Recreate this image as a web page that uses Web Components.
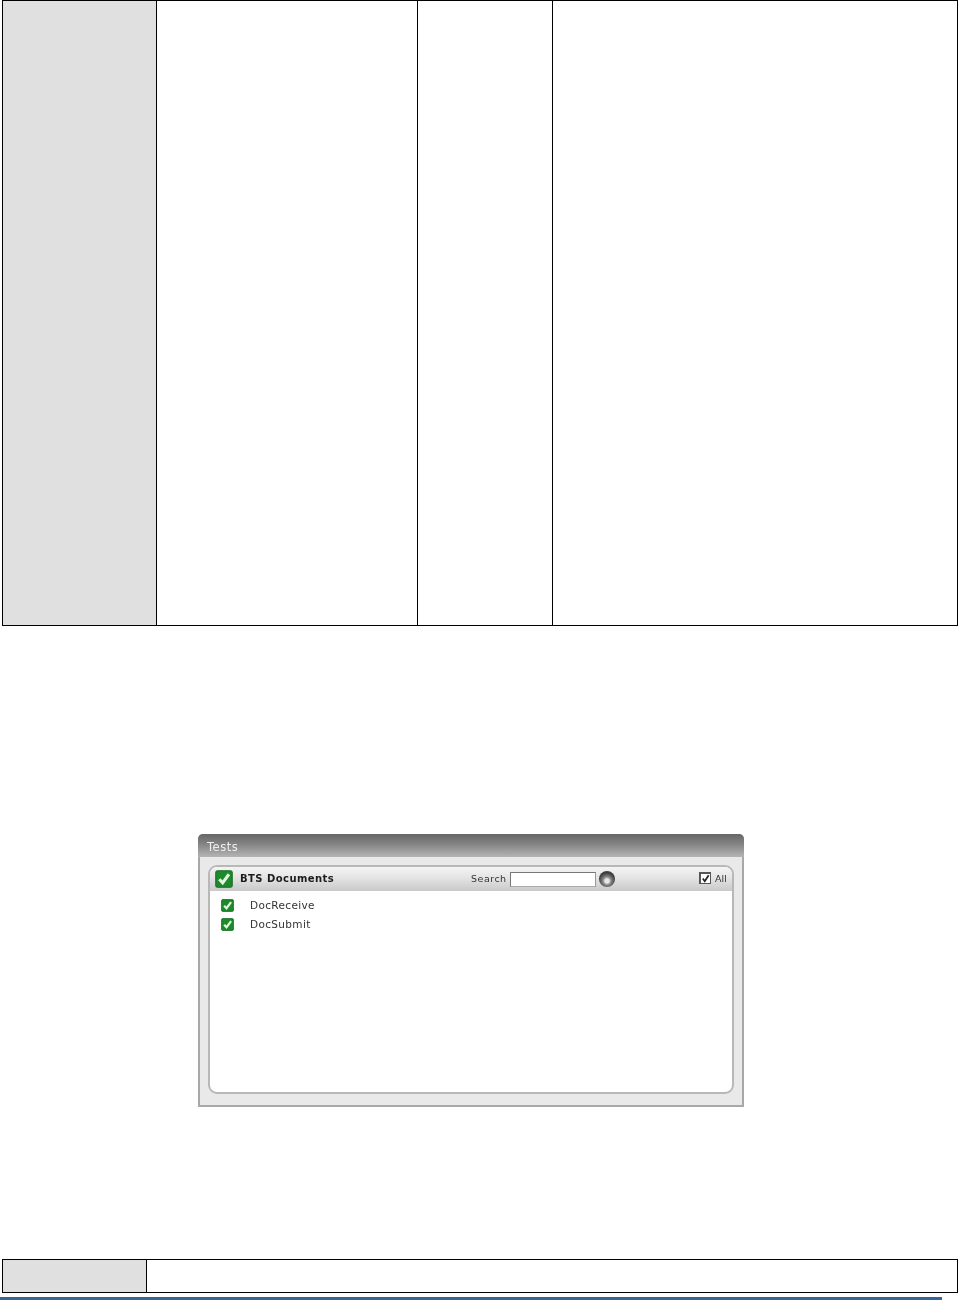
<!DOCTYPE html>
<html><head><meta charset="utf-8"><style>
html,body{margin:0;padding:0;background:#fff;font-family:"DejaVu Sans",sans-serif}
body{width:958px;height:1300px;overflow:hidden}
</style></head><body>
<doc-table style="--h:626px;--cols:153px 261px 135px 1fr;--top:1px"><i></i><i></i><i></i><i></i></doc-table>
<tests-panel></tests-panel>
<doc-table style="--h:34px;--cols:143px 1fr;--top:1px;--gap:152px"><i></i><i></i></doc-table>
<page-rule></page-rule>
<script>
const chk=s=>`<svg width="${s}" height="${s}" viewBox="0 0 16 16" style="display:block;flex:none"><rect x=".7" y=".7" width="14.6" height="14.6" rx="1.6" fill="#1d8a2b" stroke="#176f22"/><path d="M3.8 8.2l3 3.2L12.4 3.8" fill="none" stroke="#e4f6de" stroke-width="2.7"/></svg>`;
customElements.define('doc-table',class extends HTMLElement{constructor(){super();this.attachShadow({mode:'open'}).innerHTML=`<style>
:host{display:grid;grid-template-columns:var(--cols);height:var(--h);margin:var(--gap,0) 0 0 2px;width:956px;box-sizing:border-box;border:1.5px solid #000;border-top-width:var(--top);border-right-width:1px}
::slotted(i){display:block;border-left:1px solid #000}
::slotted(i:first-child){background:#e0e0e0;border-left:0}
</style><slot></slot>`}});
customElements.define('page-rule',class extends HTMLElement{constructor(){super();this.attachShadow({mode:'open'}).innerHTML=`<style>:host{display:block;width:942px;height:3px;margin-top:4px;background:#386594}</style>`}});
customElements.define('tests-panel',class extends HTMLElement{constructor(){super();this.attachShadow({mode:'open'}).innerHTML=`<style>
:host{display:flex;flex-direction:column;width:546px;height:273px;margin:208px 0 0 198px;box-sizing:border-box;background:#e9e9e9;border:2px solid #a8a8a8;border-top:0;border-radius:5px 5px 0 0;font-family:"DejaVu Sans",sans-serif;color:#222;filter:blur(.3px)}
.title{height:23px;margin:0 -2px;border-radius:5px 5px 0 0;background:linear-gradient(#666,#858585 45%,#b4b4b4);color:#eee;font-size:11.5px;line-height:27px;padding-left:9px;letter-spacing:.5px;flex:none}
.inner{flex:1;margin:8px 8px 11px 8px;background:#fff;border:2px solid #b8b8b8;border-radius:9px;display:flex;flex-direction:column;min-height:0}
.head{height:24px;flex:none;display:flex;align-items:center;border-radius:7px 7px 0 0;background:linear-gradient(#f4f4f4,#e6e6e6 40%,#c9c9c9);padding-left:5px}
.head b{font-size:10px;margin:-2px 0 0 7px;letter-spacing:.45px;color:#1c1c1c;width:231px;white-space:nowrap}
.s{font-size:9.5px;color:#333;letter-spacing:.5px;width:39px;margin-top:-2px}
.inp{width:84px;height:13px;background:#fff;border:1px solid #777;border-right-color:#999;border-bottom-color:#aaa}
.go{width:16px;height:16px;border-radius:50%;margin:-1px 0 0 3px;background:radial-gradient(circle at 50% 62%,#e8e8e8 0 2px,#8a8a8a 4px,#3e3e3e 8px)}
.all{margin:-2px 0 0 84px;width:9px;height:9px;border:1px solid #555;border-width:2px 1px 1px 2px;background:#fff;display:flex}
.lbl{font-size:9.5px;margin:-2px 0 0 4px;color:#333}
.row{display:flex;align-items:center;height:19px;padding-left:11px;font-size:10.5px;color:#333;letter-spacing:.35px}
.row span{margin:-1px 0 0 16px}
.rows{padding-top:5px}
</style>
<div class="title">Tests</div>
<div class="inner"><div class="head">${chk(18)}<b>BTS Documents</b><span class="s">Search</span><span class="inp"></span><span class="go"></span><span class="all"><svg width="9" height="9" viewBox="0 0 10 10"><path d="M2 5l2.2 3L8.5 1.5" fill="none" stroke="#222" stroke-width="2"/></svg></span><span class="lbl">All</span></div>
<div class="rows"><div class="row">${chk(13)}<span>DocReceive</span></div><div class="row">${chk(13)}<span>DocSubmit</span></div></div></div>`}});
</script></body></html>
